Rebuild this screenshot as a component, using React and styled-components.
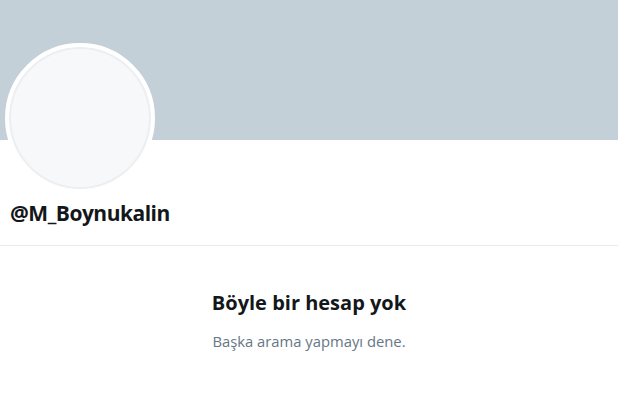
import React from 'react';
import styled, { createGlobalStyle } from 'styled-components';

const GlobalStyle = createGlobalStyle`
  html, body {
    margin: 0;
    padding: 0;
    background: #ffffff;
  }
  body {
    font-family: "Open Sans", "Noto Sans", "Liberation Sans", sans-serif;
    color: #14171a;
  }
`;

const Page = styled.div`
  width: 618px;
  height: 405px;
  overflow: hidden;
  background: #fff;
`;

const Banner = styled.div`
  height: 140px;
  background-color: #c4d0d8;
`;

const ProfileHeader = styled.div`
  padding: 0 0 0 5px;
  height: 105px;
  border-bottom: 1px solid #e9edf0;
  display: flex;
  flex-direction: column;
`;

const Avatar = styled.div`
  width: 142px;
  height: 142px;
  margin-top: -97px;
  border-radius: 50%;
  background: #f6f8fa;
  border: 4px solid #ffffff;
  box-shadow: inset 0 0 0 2px #eceff1;
`;

const Handle = styled.h1`
  margin: 8px 0 0 5px;
  font-size: 21px;
  font-weight: 700;
  line-height: 25px;
  letter-spacing: -0.5px;
`;

const Empty = styled.div`
  display: flex;
  flex-direction: column;
  align-items: center;
  padding-top: 44px;
`;

const Title = styled.h2`
  margin: 0;
  font-size: 20px;
  font-weight: 700;
  line-height: 26px;
`;

const Subtitle = styled.p`
  margin: 15px 0 0;
  font-size: 14.8px;
  line-height: 20px;
  color: #657786;
`;

export default function App() {
  return (
    <Page>
      <GlobalStyle />
      <Banner />
      <ProfileHeader>
        <Avatar />
        <Handle>@M_Boynukalin</Handle>
      </ProfileHeader>
      <Empty>
        <Title>Böyle bir hesap yok</Title>
        <Subtitle>Başka arama yapmayı dene.</Subtitle>
      </Empty>
    </Page>
  );
}
